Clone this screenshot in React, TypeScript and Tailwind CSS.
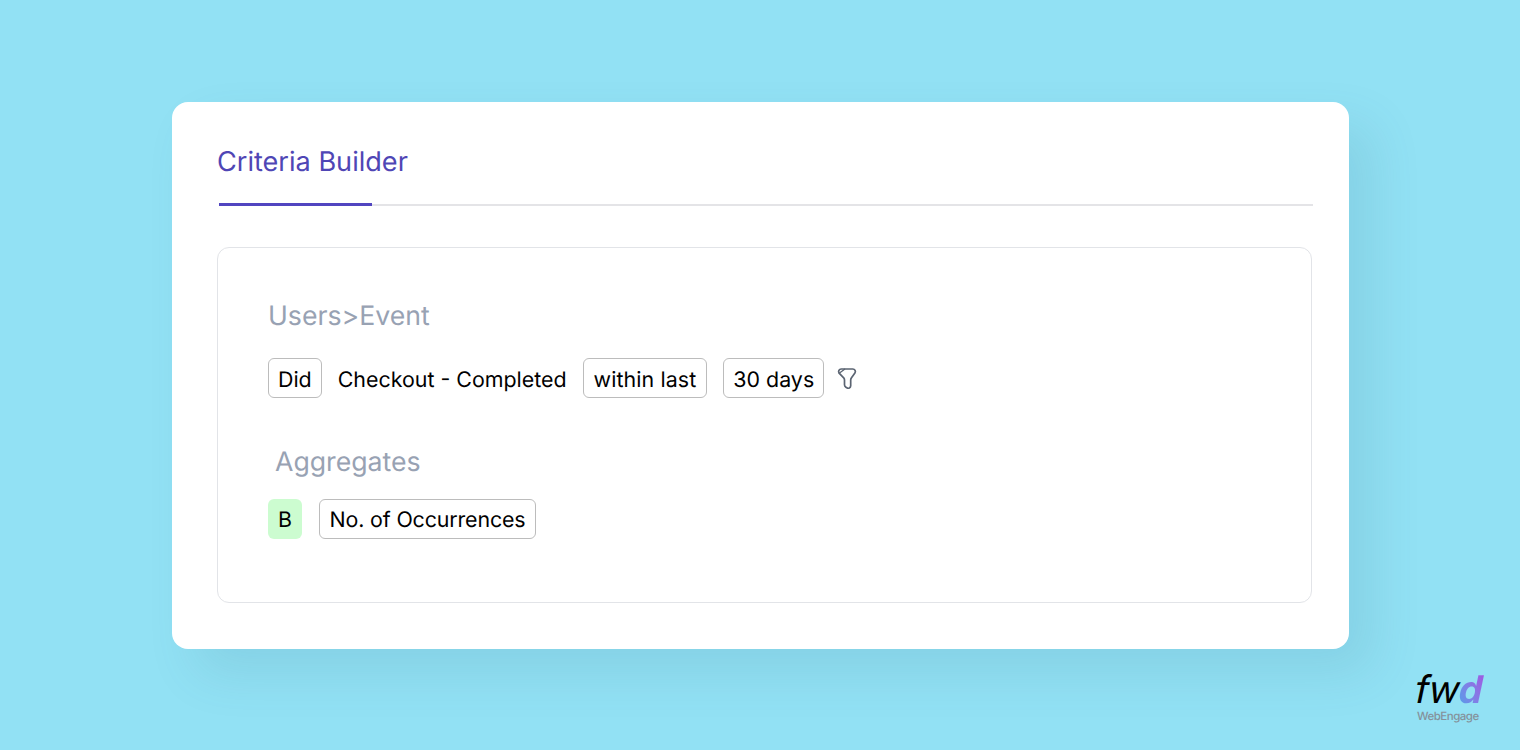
import React from "react";

const font = { fontFamily: "Inter, sans-serif" };

function Chip({ children, cls }: { children: React.ReactNode; cls: string }) {
  return (
    <span className={`flex h-[40px] items-center rounded-[6px] border border-[#bcbcbc] bg-white text-[21.4px] leading-none text-black ${cls}`}>
      {children}
    </span>
  );
}

export default function App() {
  return (
    <div
      className="relative h-[750px] w-full overflow-hidden bg-[#92e1f4] pl-[172px] pt-[102px] [text-rendering:geometricPrecision]"
      style={font}
    >
      <div className="h-[547px] w-[1177px] rounded-[16px] bg-white pl-[45px] pr-[36px] pt-[43px] shadow-[24px_24px_50px_rgba(40,100,120,0.12)]">
        <div className="h-[33px] text-[27.1px] leading-[33px] text-[#4f46b5]">Criteria Builder</div>
        <div className="ml-[2px] mt-[26px] flex h-[2px] bg-[#e4e4e7]">
          <div className="h-[3px] w-[153px] -translate-y-[1px] bg-[#5145c0]" />
        </div>
        <div className="mt-[41px] h-[356px] w-[1095px] rounded-[12px] border border-[#e2e4e8] pl-[50px] pt-[52px]">
          <div className="h-[32px] text-[26.67px] leading-[32px] text-[#98a2b3]">Users&gt;Event</div>
          <div className="mt-[26px] flex items-center">
            <Chip cls="px-[9px] pt-[5px]">Did</Chip>
            <span className="ml-[16px] pt-[5px] text-[21.4px] leading-none text-black">Checkout - Completed</span>
            <span className="ml-[16px]"><Chip cls="px-[10px] pt-[5px] tracking-[0.1px]">within last</Chip></span>
            <span className="ml-[16px]"><Chip cls="px-[9px] pt-[5px]">30 days</Chip></span>
            <svg
              className="ml-[13px]"
              width="20"
              height="23"
              viewBox="0 0 20 23"
              fill="none"
              stroke="#5b6472"
              strokeWidth="1.7"
              strokeLinejoin="round"
              strokeLinecap="round"
            >
              <path d="M4.2 2h11.6a2.6 2.6 0 0 1 2.1 4.1l-3.4 4.7c-.5.7-.8 1.5-.8 2.3v5.6c0 2-2.2 3.2-3.9 2.1l-.9-.6c-.9-.6-1.4-1.5-1.4-2.5v-4.6c0-.8-.3-1.6-.8-2.3L2.1 6.1A2.6 2.6 0 0 1 4.2 2z" />
              <path d="M2.2 6.2 7.6 2.2" strokeWidth="1.3" />
            </svg>
          </div>
          <div className="ml-[7px] mt-[48px] h-[32px] text-[26.67px] leading-[32px] text-[#98a2b3]">Aggregates</div>
          <div className="mt-[21px] flex items-center">
            <span className="flex h-[40px] w-[34px] items-center justify-center rounded-[6px] bg-[#ccfcd0] pt-[3px] text-[21.4px] leading-none text-black">
              B
            </span>
            <span className="ml-[17px]"><Chip cls="px-[9.5px] pt-[3px] tracking-[-0.14px]">No. of Occurrences</Chip></span>
          </div>
        </div>
      </div>
      <div className="absolute left-[1412px] top-[672px] w-[74px]">
        <div className="flex h-[36px] origin-bottom-left -skew-x-12 items-end text-[38px] leading-[36px] tracking-[-1.2px] text-black">
          fw
          <span className="bg-gradient-to-tr from-[#35a4ea] to-[#a44ce0] bg-clip-text pr-[2px] font-bold text-transparent">d</span>
        </div>
        <div className="mt-[2px] pl-[5px] text-[11.5px] font-medium leading-[12px] tracking-[-0.5px] text-[#84929b]">WebEngage</div>
      </div>
    </div>
  );
}
